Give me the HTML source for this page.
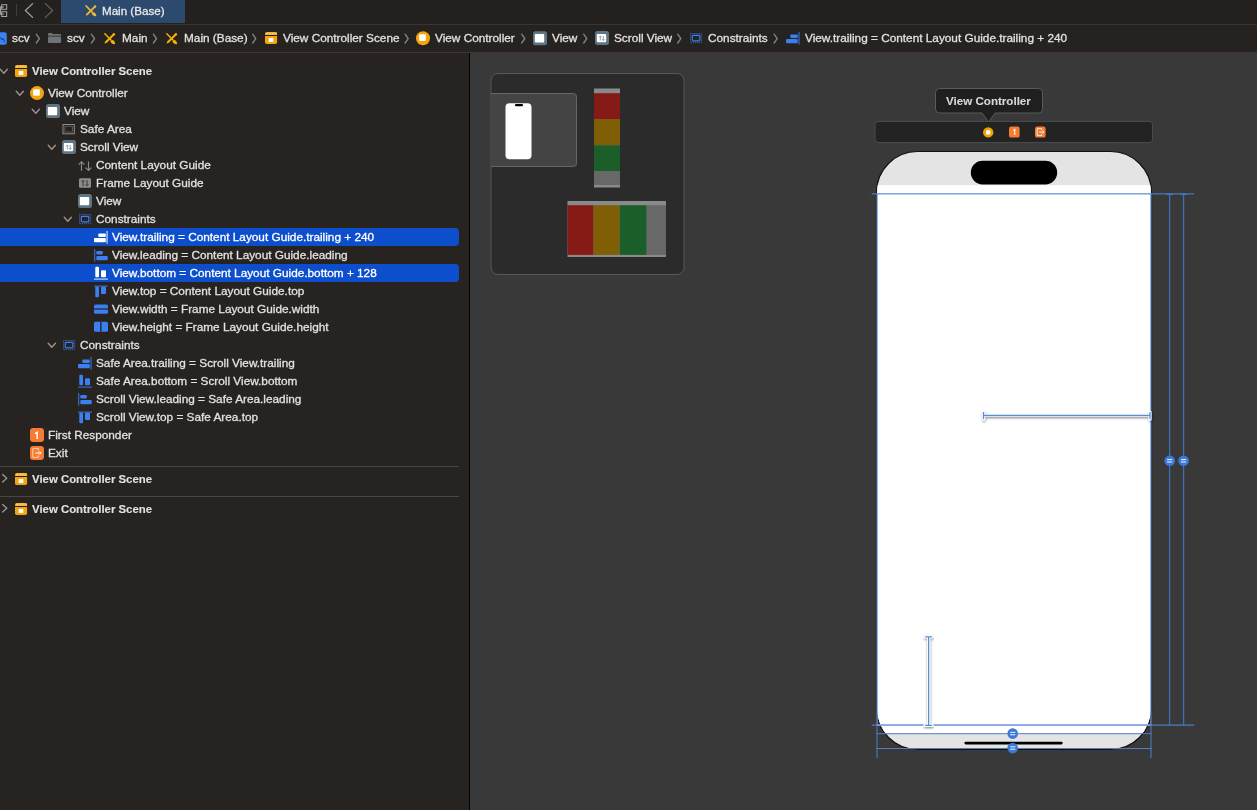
<!DOCTYPE html>
<html><head><meta charset="utf-8">
<style>
*{margin:0;padding:0;box-sizing:border-box}
html,body{width:1257px;height:810px;overflow:hidden;background:#393939;font-family:"Liberation Sans",sans-serif}
.a{position:absolute}
#tabbar{left:0;top:0;width:1257px;height:24px;background:#23201d}
#tab{left:61px;top:0;width:124px;height:23px;background:#2b4a6d}
#crumbs{left:0;top:24px;width:1257px;height:29px;background:#26221f;border-top:1px solid #3a3535;border-bottom:1px solid #3b3633}
#nav{left:0;top:53px;width:469px;height:757px;background:#272320}
#divider{left:469px;top:53px;width:1px;height:757px;background:#000}
.t{will-change:transform;position:absolute;height:18px;line-height:18px;font-size:11.8px;color:#e2e1e0;white-space:nowrap;-webkit-text-stroke:0.3px currentColor}
.b{font-weight:bold;font-size:11.4px;-webkit-text-stroke:0.1px currentColor}
.sel{position:absolute;left:0;width:459px;height:18px;background:#0d4ecd;border-radius:0 4px 4px 0}
.sep{position:absolute;left:0;width:459px;height:1px;background:#4a4644}
.ct{position:absolute;height:18px;line-height:18px;font-size:11.8px;color:#dedddc;white-space:nowrap}
</style></head><body>
<div id="tabbar" class="a"></div>
<div id="tab" class="a"></div>
<div id="crumbs" class="a"></div>
<div id="nav" class="a"></div>
<div id="divider" class="a"></div>
<!-- selection rows -->
<div class="sel" style="top:228px"></div>
<div class="sel" style="top:264px"></div>
<div class="sep" style="top:466px"></div>
<div class="sep" style="top:496px"></div>

<!-- tab text -->
<div class="t" style="left:102px;top:2px;color:#e8e8ea;font-size:11.6px">Main (Base)</div>

<!-- breadcrumb texts -->
<div class="t" style="left:12px;top:29px">scv</div>
<div class="t" style="left:67px;top:29px">scv</div>
<div class="t" style="left:122px;top:29px">Main</div>
<div class="t" style="left:184px;top:29px">Main (Base)</div>
<div class="t" style="left:283px;top:29px">View Controller Scene</div>
<div class="t" style="left:435px;top:29px">View Controller</div>
<div class="t" style="left:552px;top:29px">View</div>
<div class="t" style="left:614px;top:29px">Scroll View</div>
<div class="t" style="left:708px;top:29px">Constraints</div>
<div class="t" style="left:805px;top:29px">View.trailing = Content Layout Guide.trailing + 240</div>

<!-- tree texts -->
<div class="t b" style="left:32px;top:62px">View Controller Scene</div>
<div class="t" style="left:48px;top:84px">View Controller</div>
<div class="t" style="left:64px;top:102px">View</div>
<div class="t" style="left:80px;top:120px">Safe Area</div>
<div class="t" style="left:80px;top:138px">Scroll View</div>
<div class="t" style="left:96px;top:156px">Content Layout Guide</div>
<div class="t" style="left:96px;top:174px">Frame Layout Guide</div>
<div class="t" style="left:96px;top:192px">View</div>
<div class="t" style="left:96px;top:210px">Constraints</div>
<div class="t" style="left:112px;top:228px;color:#fff">View.trailing = Content Layout Guide.trailing + 240</div>
<div class="t" style="left:112px;top:246px">View.leading = Content Layout Guide.leading</div>
<div class="t" style="left:112px;top:264px;color:#fff">View.bottom = Content Layout Guide.bottom + 128</div>
<div class="t" style="left:112px;top:282px">View.top = Content Layout Guide.top</div>
<div class="t" style="left:112px;top:300px">View.width = Frame Layout Guide.width</div>
<div class="t" style="left:112px;top:318px">View.height = Frame Layout Guide.height</div>
<div class="t" style="left:80px;top:336px">Constraints</div>
<div class="t" style="left:96px;top:354px">Safe Area.trailing = Scroll View.trailing</div>
<div class="t" style="left:96px;top:372px">Safe Area.bottom = Scroll View.bottom</div>
<div class="t" style="left:96px;top:390px">Scroll View.leading = Safe Area.leading</div>
<div class="t" style="left:96px;top:408px">Scroll View.top = Safe Area.top</div>
<div class="t" style="left:48px;top:426px">First Responder</div>
<div class="t" style="left:48px;top:444px">Exit</div>
<div class="t b" style="left:32px;top:470px">View Controller Scene</div>
<div class="t b" style="left:32px;top:500px">View Controller Scene</div>

<!-- ICONS & CANVAS -->
<svg class="a" style="left:0;top:0" width="1257" height="810" viewBox="0 0 1257 810">
<defs><filter id="sh" x="-20%" y="-200%" width="140%" height="500%"><feDropShadow dx="0.4" dy="1.2" stdDeviation="1.1" flood-color="#000" flood-opacity="0.45"/></filter></defs>
<rect x="491" y="73.5" width="193" height="201" rx="7" fill="#2b2b2b" stroke="#575757" stroke-width="1"/>
<path d="M491 93.5 H573.5 Q576.5 93.5 576.5 96.5 V163.5 Q576.5 166.5 573.5 166.5 H491" fill="#444444" stroke="#666" stroke-width="1"/>
<rect x="505.5" y="103.2" width="26" height="56" rx="4" fill="#fff"/>
<rect x="515" y="104" width="8" height="2.3" rx="1.1" fill="#000"/>
<rect x="594" y="88.5" width="26" height="99" fill="#8a8a8a"/>
<rect x="594" y="93.2" width="26" height="25.8" fill="#861a16"/>
<rect x="594" y="119" width="26" height="26.2" fill="#7f5e06"/>
<rect x="594" y="145.2" width="26" height="25.8" fill="#1c5e2a"/>
<rect x="594" y="171" width="26" height="14" fill="#686868"/>
<rect x="567.5" y="201" width="98.5" height="56" fill="#8a8a8a"/>
<rect x="567.5" y="205.2" width="26.1" height="49.7" fill="#861a16"/>
<rect x="593.6" y="205.2" width="26.1" height="49.7" fill="#7f5e06"/>
<rect x="619.7" y="205.2" width="27" height="49.7" fill="#1c5e2a"/>
<rect x="646.7" y="205.2" width="19.3" height="49.7" fill="#686868"/>
<path d="M939.5 88.5 H1038.5 Q1042.5 88.5 1042.5 92.5 V109 Q1042.5 113 1038.5 113 H995.2 L988.6 122 L982 113 H939.5 Q935.5 113 935.5 109 V92.5 Q935.5 88.5 939.5 88.5 Z" fill="#1f1f1f" stroke="#5a5a5a" stroke-width="1"/>
<rect x="875" y="121.5" width="277.5" height="21" rx="3" fill="#232323" stroke="#4a4a4a" stroke-width="1"/>
<circle cx="988.2" cy="132.4" r="5.2" fill="#f0a000"/><rect x="986" y="130.2" width="4.4" height="4.2" rx="0.6" fill="#fff"/>
<rect x="1009" y="126.6" width="10.6" height="11" rx="2.2" fill="#f57c32"/><path d="M1013.2 130.4 L1014.8 129.4 V135" stroke="#fff" stroke-width="1.1" fill="none"/>
<rect x="1035" y="126.6" width="10.6" height="11" rx="2.2" fill="#f57c32"/><path d="M1041.6 130 V128.6 H1037.2 V135.6 H1041.6 V134.2 M1039.4 132.1 H1044 M1042.6 130.8 L1044 132.1 L1042.6 133.4" stroke="#fff" stroke-width="0.8" fill="none"/>
<rect x="876.5" y="151.5" width="275" height="598" rx="41" fill="#e4e4e4" stroke="#111" stroke-width="1.2"/>
<clipPath id="ph"><rect x="877" y="152" width="274" height="597" rx="40.5"/></clipPath>
<rect x="876" y="185.2" width="276" height="548.8" fill="#ffffff" clip-path="url(#ph)"/>
<rect x="970.8" y="160.8" width="86.4" height="23.6" rx="11.8" fill="#000"/>
<rect x="964.4" y="741.7" width="98.3" height="2.8" rx="1.4" fill="#000"/>
<rect x="871.7" y="193.3" width="322.5" height="1.1" fill="#4d7ec6"/>
<rect x="1166.2" y="193.8" width="6.9" height="1.2" fill="#3b78cc"/>
<rect x="1180.2" y="193.8" width="6.9" height="1.2" fill="#3b78cc"/>
<rect x="871.7" y="724.5" width="322.5" height="1.2" fill="#4d7ec6"/>
<rect x="877.5" y="724.3" width="272.5" height="1.5" fill="#8fa8ec"/>
<rect x="876.5" y="193" width="1.2" height="533" fill="#6a96d8"/>
<rect x="1150.3" y="193" width="1.2" height="533" fill="#6a96d8"/>
<rect x="1169.1" y="193.5" width="1.1" height="532" fill="#3b78cc"/>
<rect x="1183.1" y="193.5" width="1.1" height="532" fill="#3b78cc"/>
<rect x="876.5" y="733.2" width="275" height="1" fill="#4d7ec6"/>
<rect x="876.5" y="748" width="275" height="1" fill="#4d7ec6"/>
<rect x="876.5" y="726" width="1" height="32" fill="#4d7ec6"/>
<rect x="1150.5" y="726" width="1" height="32" fill="#4d7ec6"/>
<circle cx="1169.7" cy="460.8" r="5.3" fill="#3b78d8"/><rect x="1167.1000000000001" y="459.0" width="5.2" height="1.1" fill="#dfe9f8"/><rect x="1167.1000000000001" y="461.40000000000003" width="5.2" height="1.1" fill="#dfe9f8"/>
<circle cx="1183.6" cy="460.8" r="5.3" fill="#3b78d8"/><rect x="1181.0" y="459.0" width="5.2" height="1.1" fill="#dfe9f8"/><rect x="1181.0" y="461.40000000000003" width="5.2" height="1.1" fill="#dfe9f8"/>
<circle cx="1012.7" cy="733.6" r="5.3" fill="#3b78d8"/><rect x="1010.1" y="731.8000000000001" width="5.2" height="1.1" fill="#dfe9f8"/><rect x="1010.1" y="734.2" width="5.2" height="1.1" fill="#dfe9f8"/>
<circle cx="1012.7" cy="748.1" r="5.3" fill="#3b78d8"/><rect x="1010.1" y="746.3000000000001" width="5.2" height="1.1" fill="#dfe9f8"/><rect x="1010.1" y="748.7" width="5.2" height="1.1" fill="#dfe9f8"/>
<path d="M983.5 412 V419.2 M983.5 415.5 H1150 M1150 412 V419.2" stroke="#ffffff" stroke-width="3.2" fill="none" stroke-linecap="round" filter="url(#sh)"/>
<path d="M983.5 412 V419.2 M983.5 415.5 H1150 M1150 412 V419.2" stroke="#5a8ed2" stroke-width="1.3" fill="none"/>
<path d="M925 636.8 H932.2 M928.6 636.8 V725.3 M925 725.3 H932.2" stroke="#ffffff" stroke-width="3.2" fill="none" stroke-linecap="round" filter="url(#sh)"/>
<path d="M925 636.8 H932.2 M928.6 636.8 V725.3 M925 725.3 H932.2" stroke="#5a8ed2" stroke-width="1.3" fill="none"/>
<rect x="1.7" y="4.7" width="5" height="4.6" fill="none" stroke="#a9a7a5" stroke-width="1"/>
<rect x="1.7" y="11.7" width="5" height="4.8" fill="none" stroke="#a9a7a5" stroke-width="1"/>
<path d="M-1 7 H4 M-1 14.1 H4 M0.6 7 V14.1" stroke="#a9a7a5" stroke-width="1" fill="none"/>
<rect x="16" y="4" width="1" height="12" fill="#3f3c3a"/>
<path d="M32.6 3.6 L25.4 10.5 L32.6 17.4" stroke="#a3a19f" stroke-width="1.3" fill="none" stroke-linecap="round" stroke-linejoin="round"/>
<path d="M45.4 3.6 L52.6 10.5 L45.4 17.4" stroke="#62605e" stroke-width="1.3" fill="none" stroke-linecap="round" stroke-linejoin="round"/>
<path d="M85.7 15.7 L86.4 13.7 L94.2 5.8999999999999995 L95.60000000000001 7.3 L87.8 15.1 Z" fill="#f3b630"/>
<circle cx="95.10000000000001" cy="6.3999999999999995" r="1.2" fill="#f3b630"/>
<path d="M86.0 5.8999999999999995 L92.2 12.1" stroke="#f3b630" stroke-width="1.5" stroke-linecap="round"/>
<path d="M91.60000000000001 13.4 Q93.2 11.399999999999999 94.9 12.7 Q96.5 14.6 96.3 16.2 Q94.2 16.4 92.5 15.0 Z" fill="#f3b630"/>
<rect x="-4" y="32.2" width="10.8" height="12.5" rx="2.2" fill="#3d82f0"/>
<path d="M0 37 L1.8 40 L3 38 L4.6 42" stroke="#1b3d80" stroke-width="0.9" fill="none"/>
<path d="M48 34.2 Q48 32.9 49.2 32.9 H51.8 L52.8 34 H60 Q61.1 34 61.1 35.1 V35.8 H48 Z" fill="#6f7479"/>
<rect x="48" y="36.5" width="13.1" height="6.5" rx="1" fill="#6f7479"/>
<path d="M36.3 34.2 L39.4 38.6 L36.3 43" fill="none" stroke="#858280" stroke-width="1.4" stroke-linecap="round" stroke-linejoin="round"/>
<path d="M91.4 34.2 L94.5 38.6 L91.4 43" fill="none" stroke="#858280" stroke-width="1.4" stroke-linecap="round" stroke-linejoin="round"/>
<path d="M153.4 34.2 L156.5 38.6 L153.4 43" fill="none" stroke="#858280" stroke-width="1.4" stroke-linecap="round" stroke-linejoin="round"/>
<path d="M252.7 34.2 L255.79999999999998 38.6 L252.7 43" fill="none" stroke="#858280" stroke-width="1.4" stroke-linecap="round" stroke-linejoin="round"/>
<path d="M405.1 34.2 L408.20000000000005 38.6 L405.1 43" fill="none" stroke="#858280" stroke-width="1.4" stroke-linecap="round" stroke-linejoin="round"/>
<path d="M521.7 34.2 L524.8000000000001 38.6 L521.7 43" fill="none" stroke="#858280" stroke-width="1.4" stroke-linecap="round" stroke-linejoin="round"/>
<path d="M583.7 34.2 L586.8000000000001 38.6 L583.7 43" fill="none" stroke="#858280" stroke-width="1.4" stroke-linecap="round" stroke-linejoin="round"/>
<path d="M677.7 34.2 L680.8000000000001 38.6 L677.7 43" fill="none" stroke="#858280" stroke-width="1.4" stroke-linecap="round" stroke-linejoin="round"/>
<path d="M774.1 34.2 L777.2 38.6 L774.1 43" fill="none" stroke="#858280" stroke-width="1.4" stroke-linecap="round" stroke-linejoin="round"/>
<path d="M104.5 43.6 L105.2 41.6 L113 33.8 L114.4 35.2 L106.6 43 Z" fill="#f5b200"/>
<circle cx="113.9" cy="34.3" r="1.2" fill="#f5b200"/>
<path d="M104.8 33.8 L111 40" stroke="#f5b200" stroke-width="1.5" stroke-linecap="round"/>
<path d="M110.4 41.3 Q112 39.3 113.7 40.6 Q115.3 42.5 115.1 44.1 Q113 44.3 111.3 42.9 Z" fill="#f5b200"/>
<path d="M166.5 43.6 L167.2 41.6 L175 33.8 L176.4 35.2 L168.6 43 Z" fill="#f5b200"/>
<circle cx="175.9" cy="34.3" r="1.2" fill="#f5b200"/>
<path d="M166.8 33.8 L173 40" stroke="#f5b200" stroke-width="1.5" stroke-linecap="round"/>
<path d="M172.4 41.3 Q174 39.3 175.7 40.6 Q177.3 42.5 177.1 44.1 Q175 44.3 173.3 42.9 Z" fill="#f5b200"/>
<path d="M265 35 V33.8 Q265 32 266.8 32 H275.3 Q277.1 32 277.1 33.8 V35 Z" fill="#f5ad22"/>
<path d="M266.3 34.6 L267.8 32.6" stroke="#fbe3b0" stroke-width="1"/>
<path d="M269.2 34.6 L270.7 32.6" stroke="#fbe3b0" stroke-width="1"/>
<path d="M272.1 34.6 L273.6 32.6" stroke="#fbe3b0" stroke-width="1"/>
<path d="M275.0 34.6 L276.5 32.6" stroke="#fbe3b0" stroke-width="1"/>
<path d="M265 35.9 H277.1 V42.3 Q277.1 44.1 275.3 44.1 H266.8 Q265 44.1 265 42.3 Z" fill="#f4a40c"/>
<rect x="268.7" y="38" width="4.6" height="4" fill="#fff"/>
<circle cx="423" cy="38.2" r="7" fill="#f4a40c"/>
<rect x="419.175" y="34.275" width="6.6499999999999995" height="6.6499999999999995" rx="1" fill="#fff"/>
<rect x="533" y="31.2" width="14" height="14" rx="2.5" fill="#5f7584"/>
<rect x="534.8" y="34.1" width="9.4" height="8.3" rx="1" fill="#fff"/>
<rect x="595" y="31" width="14" height="14" rx="2.5" fill="#5f7584"/>
<rect x="596.8" y="33.9" width="9.4" height="8.3" rx="1" fill="#fff"/>
<path d="M600.3 40.5 V36 M599 37.3 L600.3 36 L601.6 37.3 M603.3 36 V40.5 M602 39.2 L603.3 40.5 L604.6 39.2" stroke="#7f92a0" stroke-width="0.85" fill="none"/>
<rect x="690.5" y="33.5" width="11.2" height="9.2" fill="none" stroke="#3b7ff0" stroke-width="0.75" stroke-dasharray="1.1 0.9"/>
<rect x="692.3" y="35.3" width="7.6" height="5.6" rx="0.8" fill="none" stroke="#3b7ff0" stroke-width="1.2"/>
<rect x="798.4" y="32" width="1.3" height="12.6" fill="#3b7ff0" opacity="0.75"/>
<rect x="790.3" y="34.4" width="7.5" height="3.5" rx="1" fill="#3b7ff0"/>
<rect x="786" y="39" width="11.8" height="4.3" rx="1" fill="#3b7ff0"/>
<path d="M0.2 69.2 L3.8 73.3 L7.4 69.2" fill="none" stroke="#9a9795" stroke-width="1.35" stroke-linecap="round" stroke-linejoin="round"/>
<path d="M15 68 V66.8 Q15 65 16.8 65 H25.3 Q27.1 65 27.1 66.8 V68 Z" fill="#f5ad22"/>
<path d="M16.3 67.6 L17.8 65.6" stroke="#fbe3b0" stroke-width="1"/>
<path d="M19.2 67.6 L20.7 65.6" stroke="#fbe3b0" stroke-width="1"/>
<path d="M22.1 67.6 L23.6 65.6" stroke="#fbe3b0" stroke-width="1"/>
<path d="M25.0 67.6 L26.5 65.6" stroke="#fbe3b0" stroke-width="1"/>
<path d="M15 68.9 H27.1 V75.3 Q27.1 77.1 25.3 77.1 H16.8 Q15 77.1 15 75.3 Z" fill="#f4a40c"/>
<rect x="18.7" y="71" width="4.6" height="4" fill="#fff"/>
<path d="M16.2 91.2 L19.8 95.3 L23.4 91.2" fill="none" stroke="#9a9795" stroke-width="1.35" stroke-linecap="round" stroke-linejoin="round"/>
<circle cx="37" cy="93.1" r="7" fill="#f4a40c"/>
<rect x="33.175" y="89.175" width="6.6499999999999995" height="6.6499999999999995" rx="1" fill="#fff"/>
<path d="M32.2 109.2 L35.8 113.3 L39.4 109.2" fill="none" stroke="#9a9795" stroke-width="1.35" stroke-linecap="round" stroke-linejoin="round"/>
<rect x="46" y="104" width="14" height="14" rx="2.5" fill="#5f7584"/>
<rect x="47.8" y="106.9" width="9.4" height="8.3" rx="1" fill="#fff"/>
<rect x="63" y="124.5" width="11.3" height="9.3" fill="none" stroke="#9c9a98" stroke-width="0.9"/>
<rect x="64.8" y="126.3" width="7.7" height="5.7" fill="none" stroke="#636160" stroke-width="0.8"/>
<path d="M48.2 145.2 L51.8 149.3 L55.4 145.2" fill="none" stroke="#9a9795" stroke-width="1.35" stroke-linecap="round" stroke-linejoin="round"/>
<rect x="62" y="140" width="14" height="14" rx="2.5" fill="#5f7584"/>
<rect x="63.8" y="142.9" width="9.4" height="8.3" rx="1" fill="#fff"/>
<path d="M67.3 149.5 V145 M66 146.3 L67.3 145 L68.6 146.3 M70.3 145 V149.5 M69 148.2 L70.3 149.5 L71.6 148.2" stroke="#7f92a0" stroke-width="0.85" fill="none"/>
<path d="M81.5 170.7 V161.79999999999998 M78.6 164.6 L81.5 161.7 L84.4 164.6 M88.5 161.5 V170.39999999999998 M85.6 167.6 L88.5 170.5 L91.4 167.6" stroke="#8f8d8b" stroke-width="1.1" fill="none"/>
<rect x="79" y="178.2" width="12" height="9.6" rx="1.3" fill="#8e8c8a"/>
<path d="M83 186.2 V180.39999999999998 M81.6 181.79999999999998 L83 180.39999999999998 L84.4 181.79999999999998 M87 180.0 V185.79999999999998 M85.6 184.39999999999998 L87 185.79999999999998 L88.4 184.39999999999998" stroke="#3a3736" stroke-width="1" fill="none"/>
<rect x="78" y="194" width="14" height="14" rx="2.5" fill="#5f7584"/>
<rect x="79.8" y="196.9" width="9.4" height="8.3" rx="1" fill="#fff"/>
<path d="M64.2 217.2 L67.8 221.3 L71.4 217.2" fill="none" stroke="#9a9795" stroke-width="1.35" stroke-linecap="round" stroke-linejoin="round"/>
<rect x="79.5" y="214.5" width="11.2" height="9.2" fill="none" stroke="#3b7ff0" stroke-width="0.75" stroke-dasharray="1.1 0.9"/>
<rect x="81.3" y="216.3" width="7.6" height="5.6" rx="0.8" fill="none" stroke="#3b7ff0" stroke-width="1.2"/>
<rect x="106.4" y="231" width="1.3" height="12.6" fill="#ffffff" opacity="0.75"/>
<rect x="98.3" y="233.4" width="7.5" height="3.5" rx="1" fill="#ffffff"/>
<rect x="94" y="238" width="11.8" height="4.3" rx="1" fill="#ffffff"/>
<rect x="94" y="249" width="1.3" height="12.6" fill="#3b7ff0" opacity="0.75"/>
<rect x="96.3" y="251" width="6.5" height="3.5" rx="1" fill="#3b7ff0"/>
<rect x="96.3" y="255.9" width="11.5" height="4.3" rx="1" fill="#3b7ff0"/>
<rect x="94" y="278.5" width="14" height="1.2" fill="#ffffff" opacity="0.75"/>
<rect x="95.3" y="266.79999999999995" width="3.7" height="10.5" rx="1" fill="#ffffff"/>
<rect x="101" y="270.2" width="5" height="7.1" rx="1" fill="#ffffff"/>
<rect x="94" y="285.5" width="14" height="1.2" fill="#3b7ff0" opacity="0.75"/>
<rect x="95.3" y="286.5" width="3.7" height="10.8" rx="1" fill="#3b7ff0"/>
<rect x="101" y="286.5" width="5" height="7.4" rx="1" fill="#3b7ff0"/>
<rect x="94" y="304.5" width="14" height="9.2" rx="1.5" fill="#3b7ff0"/>
<rect x="94" y="308.4" width="14" height="1.2" fill="#272320"/>
<rect x="94" y="321.7" width="14" height="10" rx="1.5" fill="#3b7ff0"/>
<rect x="100.2" y="321.7" width="1.3" height="10" fill="#272320"/>
<path d="M48.2 343.2 L51.8 347.3 L55.4 343.2" fill="none" stroke="#9a9795" stroke-width="1.35" stroke-linecap="round" stroke-linejoin="round"/>
<rect x="63.5" y="340.5" width="11.2" height="9.2" fill="none" stroke="#3b7ff0" stroke-width="0.75" stroke-dasharray="1.1 0.9"/>
<rect x="65.3" y="342.3" width="7.6" height="5.6" rx="0.8" fill="none" stroke="#3b7ff0" stroke-width="1.2"/>
<rect x="90.4" y="357" width="1.3" height="12.6" fill="#3b7ff0" opacity="0.75"/>
<rect x="82.3" y="359.4" width="7.5" height="3.5" rx="1" fill="#3b7ff0"/>
<rect x="78" y="364" width="11.8" height="4.3" rx="1" fill="#3b7ff0"/>
<rect x="78" y="386.5" width="14" height="1.2" fill="#3b7ff0" opacity="0.75"/>
<rect x="79.3" y="374.79999999999995" width="3.7" height="10.5" rx="1" fill="#3b7ff0"/>
<rect x="85" y="378.2" width="5" height="7.1" rx="1" fill="#3b7ff0"/>
<rect x="78" y="393" width="1.3" height="12.6" fill="#3b7ff0" opacity="0.75"/>
<rect x="80.3" y="395" width="6.5" height="3.5" rx="1" fill="#3b7ff0"/>
<rect x="80.3" y="399.9" width="11.5" height="4.3" rx="1" fill="#3b7ff0"/>
<rect x="78" y="411.5" width="14" height="1.2" fill="#3b7ff0" opacity="0.75"/>
<rect x="79.3" y="412.5" width="3.7" height="10.8" rx="1" fill="#3b7ff0"/>
<rect x="85" y="412.5" width="5" height="7.4" rx="1" fill="#3b7ff0"/>
<rect x="30" y="428" width="14" height="14" rx="3.3" fill="#f57c32"/>
<path d="M35 433.6 L37.2 432.3 V439" stroke="#fff" stroke-width="1.4" fill="none"/>
<rect x="30" y="446" width="14" height="14" rx="3.3" fill="#f57c32"/>
<path d="M38.4 450.8 V448.6 H32.8 V457.4 H38.4 V455.2" stroke="#ffd9bf" stroke-width="0.9" fill="none"/>
<path d="M35.5 453 H41" stroke="#fff" stroke-width="1.1"/><path d="M39.4 451.4 L41.2 453 L39.4 454.6" stroke="#fff" stroke-width="0.9" fill="none"/>
<path d="M2.6 474.4 L6.8 478.2 L2.6 482" fill="none" stroke="#9a9795" stroke-width="1.3" stroke-linecap="round" stroke-linejoin="round"/>
<path d="M15 476 V474.8 Q15 473 16.8 473 H25.3 Q27.1 473 27.1 474.8 V476 Z" fill="#f5ad22"/>
<path d="M16.3 475.6 L17.8 473.6" stroke="#fbe3b0" stroke-width="1"/>
<path d="M19.2 475.6 L20.7 473.6" stroke="#fbe3b0" stroke-width="1"/>
<path d="M22.1 475.6 L23.6 473.6" stroke="#fbe3b0" stroke-width="1"/>
<path d="M25.0 475.6 L26.5 473.6" stroke="#fbe3b0" stroke-width="1"/>
<path d="M15 476.9 H27.1 V483.3 Q27.1 485.1 25.3 485.1 H16.8 Q15 485.1 15 483.3 Z" fill="#f4a40c"/>
<rect x="18.7" y="479" width="4.6" height="4" fill="#fff"/>
<path d="M2.6 504.4 L6.8 508.2 L2.6 512" fill="none" stroke="#9a9795" stroke-width="1.3" stroke-linecap="round" stroke-linejoin="round"/>
<path d="M15 506 V504.8 Q15 503 16.8 503 H25.3 Q27.1 503 27.1 504.8 V506 Z" fill="#f5ad22"/>
<path d="M16.3 505.6 L17.8 503.6" stroke="#fbe3b0" stroke-width="1"/>
<path d="M19.2 505.6 L20.7 503.6" stroke="#fbe3b0" stroke-width="1"/>
<path d="M22.1 505.6 L23.6 503.6" stroke="#fbe3b0" stroke-width="1"/>
<path d="M25.0 505.6 L26.5 503.6" stroke="#fbe3b0" stroke-width="1"/>
<path d="M15 506.9 H27.1 V513.3 Q27.1 515.1 25.3 515.1 H16.8 Q15 515.1 15 513.3 Z" fill="#f4a40c"/>
<rect x="18.7" y="509" width="4.6" height="4" fill="#fff"/>
</svg>
<div class="t b" style="left:946px;top:92px;font-size:11.6px;color:#d8d8d8">View Controller</div>
</body></html>
